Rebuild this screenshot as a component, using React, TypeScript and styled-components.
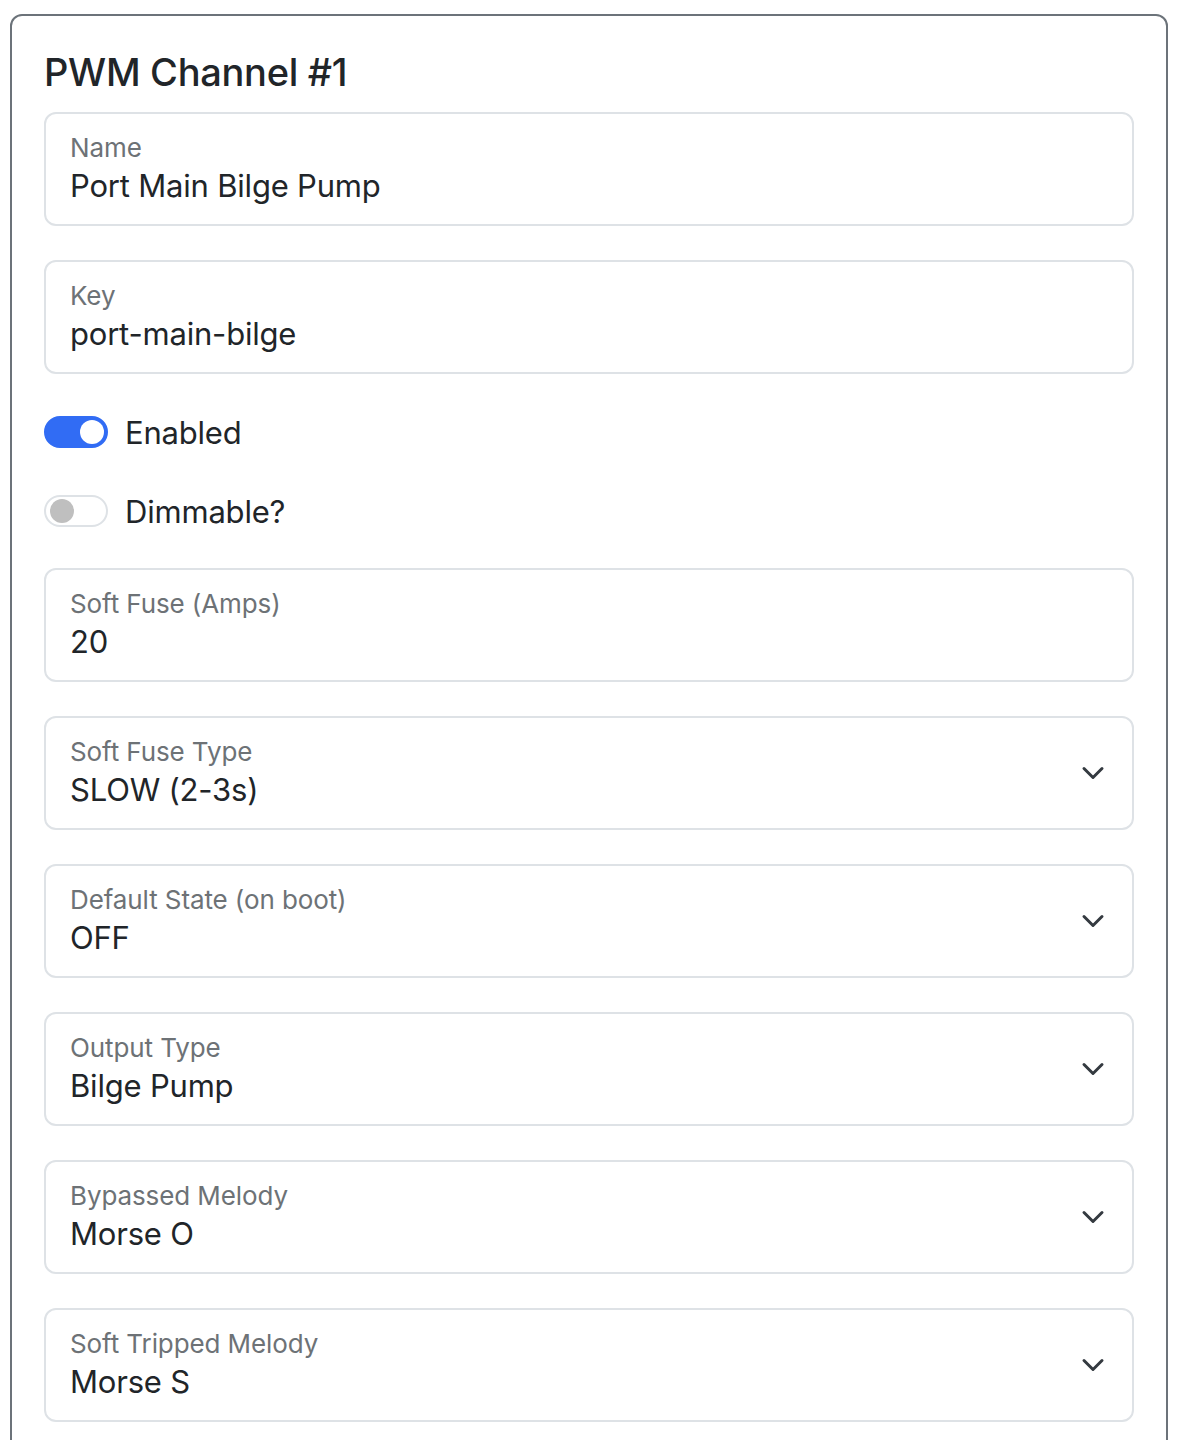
import styled, { createGlobalStyle } from 'styled-components';

const GlobalStyle = createGlobalStyle`
    html, body {
        margin : 0;
        padding : 0;
        background-color : #ffffff;
        font-family : Inter, "Noto Sans", "Liberation Sans", sans-serif;
        color : #212529;
    }
`;

const Page = styled.div`
    padding : 14px 10px 0 10px;
`;

const Card = styled.div`
    border : 2px solid #6c737a;
    border-radius : 12px;
    padding : 32px 32px 32px 32px;
    box-sizing : border-box;
`;

const Title = styled.h5`
    margin : 0 0 16px 0;
    font-size : 38px;
    line-height : 48px;
    font-weight : 500;
    letter-spacing : -0.3px;
`;

const Field = styled.div`
    position : relative;
    height : 114px;
    box-sizing : border-box;
    border : 2px solid #dee2e6;
    border-radius : 12px;
    padding : 18px 80px 0 24px;
    margin-bottom : 34px;
    display : flex;
    flex-direction : column;
    gap : 2px;
`;

const Label = styled.div`
    font-size : 26px;
    line-height : 32px;
    color : #6d7276;
    letter-spacing : -0.1px;
`;

const Value = styled.div`
    font-size : 31px;
    line-height : 40px;
    color : #212529;
    letter-spacing : -0.2px;
`;

const Chevron = styled.svg`
    position : absolute;
    right : 27px;
    top : 50%;
    width : 24px;
    height : 24px;
    margin-top : -12px;
`;

const SwitchRow = styled.label`
    display : flex;
    align-items : center;
    gap : 17px;
    height : 48px;
    margin-bottom : ${(p: { $last?: boolean }) => (p.$last ? '33px' : '31px')};
    font-size : 31px;
    letter-spacing : -0.2px;
`;

const Track = styled.span<{ $on: boolean }>`
    position : relative;
    width : 64px;
    height : 32px;
    box-sizing : border-box;
    border-radius : 16px;
    border : 2px solid ${(p) => (p.$on ? '#316cf4' : '#dee2e6')};
    background-color : ${(p) => (p.$on ? '#316cf4' : '#ffffff')};
    flex-shrink : 0;
`;

const Knob = styled.span<{ $on: boolean }>`
    position : absolute;
    top : 2px;
    left : ${(p) => (p.$on ? '34px' : '4px')};
    width : 24px;
    height : 24px;
    border-radius : 50%;
    background-color : ${(p) => (p.$on ? '#ffffff' : '#bfbfbf')};
`;

interface FieldProps {
    label : string;
    value : string;
    select? : boolean;
}

const FloatField = ({ label, value, select } : FieldProps) => (
    <Field>
        <Label>{label}</Label>
        <Value>{value}</Value>
        {select && (
            <Chevron viewBox="0 0 16 16">
                <path d="m2 5 6 6 6-6" fill="none" stroke="#343a40" strokeWidth="2" strokeLinecap="round" strokeLinejoin="round" />
            </Chevron>
        )}
    </Field>
);

const Switch = ({ on, text, last } : { on : boolean; text : string; last? : boolean }) => (
    <SwitchRow $last={last}>
        <Track $on={on}>
            <Knob $on={on} />
        </Track>
        {text}
    </SwitchRow>
);

const App = () => {
    return (
        <Page>
            <GlobalStyle />
            <Card>
                <Title>PWM Channel #1</Title>
                <FloatField label="Name" value="Port Main Bilge Pump" />
                <FloatField label="Key" value="port-main-bilge" />
                <Switch on text="Enabled" />
                <Switch on={false} text="Dimmable?" last />
                <FloatField label="Soft Fuse (Amps)" value="20" />
                <FloatField label="Soft Fuse Type" value="SLOW (2-3s)" select />
                <FloatField label="Default State (on boot)" value="OFF" select />
                <FloatField label="Output Type" value="Bilge Pump" select />
                <FloatField label="Bypassed Melody" value="Morse O" select />
                <FloatField label="Soft Tripped Melody" value="Morse S" select />
            </Card>
        </Page>
    );
};

export default App;
